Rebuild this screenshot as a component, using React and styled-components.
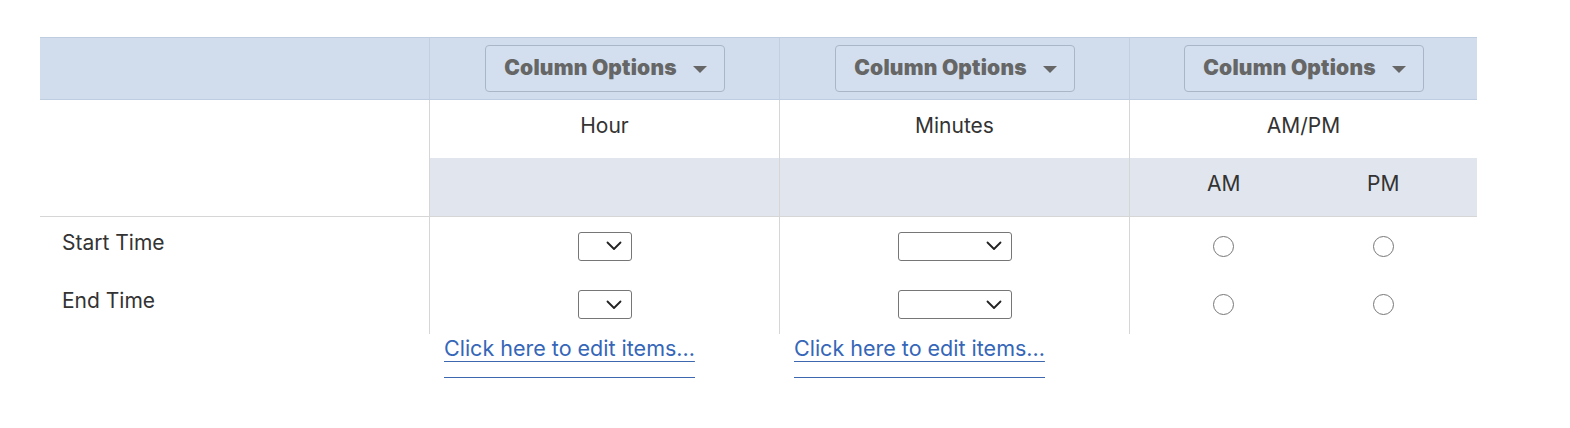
import React from "react";
import styled, { createGlobalStyle } from "styled-components";

const Global = createGlobalStyle`
  html, body { margin: 0; padding: 0; background: #fff; }
  body { font-family: Inter, "Liberation Sans", Arial, sans-serif; color: #333; }
`;

const Page = styled.div`
  padding: 37px 0 0 40px;
  width: 1437px;
`;

const Grid = styled.div`
  display: grid;
  grid-template-columns: 389px 350px 350px 348px;
`;

const HeadCell = styled.div`
  height: 61px;
  background: #d1ddec;
  border-top: 1px solid #bfcde0;
  border-bottom: 1px solid #bfcde0;
  border-left: ${(p) => (p.$first ? "none" : "1px solid #c3cfdf")};
  display: flex;
  align-items: center;
  justify-content: center;
  box-sizing: content-box;
`;

const OptionsButton = styled.div`
  width: 240px;
  height: 47px;
  box-sizing: border-box;
  border: 1px solid #a9b6c8;
  border-radius: 4px;
  background: #d3dfee;
  display: flex;
  align-items: center;
  justify-content: center;
  gap: 16px;
  font-family: Inter, "Open Sans", sans-serif;
  font-weight: 900;
  font-size: 21px;
  letter-spacing: 0.2px;
  color: #666;
  padding: 0 0 3px 2px;
`;

const Caret = styled.span`
  width: 0;
  height: 0;
  border-left: 7px solid transparent;
  border-right: 7px solid transparent;
  border-top: 7px solid #666;
  margin-top: 4px;
`;

const Cell = styled.div`
  height: ${(p) => p.$h || 58}px;
  box-sizing: border-box;
  border-left: ${(p) => (p.$first ? "none" : "1px solid #d6d6d6")};
  border-bottom: ${(p) => (p.$bottom ? "1px solid #d6d6d6" : "none")};
  background: ${(p) => (p.$grey ? "#e1e5ed" : "#fff")};
  display: flex;
  align-items: center;
  justify-content: ${(p) => (p.$left ? "flex-start" : "center")};
  padding-left: ${(p) => (p.$left ? "22px" : "0")};
  font-size: 21px;
  color: #333;
`;

const Label = styled.span`
  margin-top: ${(p) => p.$mt || 0}px;
`;

const Pair = styled.div`
  width: 100%;
  padding: 0 14px;
  box-sizing: border-box;
  display: grid;
  grid-template-columns: 1fr 1fr;
  justify-items: center;
  align-items: center;
`;

const SelectBox = styled.div`
  width: ${(p) => p.$w}px;
  height: 29px;
  box-sizing: border-box;
  border: 1px solid #767676;
  border-radius: 3px;
  background: #fff;
  display: flex;
  align-items: center;
  justify-content: flex-end;
  padding-right: 9px;
  margin-top: ${(p) => p.$mt || 0}px;
`;

const Radio = styled.span`
  display: block;
  width: 21px;
  height: 21px;
  box-sizing: border-box;
  border: 1.5px solid #777;
  border-radius: 50%;
  background: #fff;
  margin-top: ${(p) => p.$mt || 0}px;
`;

const LinkCell = styled.div`
  padding: 0 0 0 15px;
`;

const EditLink = styled.a`
  display: inline-block;
  font-size: 21.5px;
  color: #3566b8;
  text-decoration: underline;
  text-decoration-color: #3d68b0;
  text-decoration-thickness: 1px;
  text-underline-offset: 5px;
  border-bottom: 1px solid #3d68b0;
  padding-bottom: 14px;
  line-height: 30px;
  margin-top: -1px;
  cursor: pointer;
`;

const Chevron = () => (
  <svg width="16" height="10" viewBox="0 0 16 10">
    <path d="M1.5 1.5 L8 8 L14.5 1.5" fill="none" stroke="#222" strokeWidth="1.8" strokeLinecap="round" strokeLinejoin="round" />
  </svg>
);

const rows = [
  { label: "Start Time", h: 58, mt: -7, ctl: 0 },
  { label: "End Time", h: 59, mt: -8, ctl: 0 },
];

export default function App() {
  return (
    <>
      <Global />
      <Page>
        <Grid>
          <HeadCell $first />
          {[0, 1, 2].map((i) => (
            <HeadCell key={i}>
              <OptionsButton>
                Column Options
                <Caret />
              </OptionsButton>
            </HeadCell>
          ))}

          <Cell $first />
          <Cell>
            <Label $mt={-7}>Hour</Label>
          </Cell>
          <Cell>
            <Label $mt={-7}>Minutes</Label>
          </Cell>
          <Cell>
            <Label $mt={-7}>AM/PM</Label>
          </Cell>

          <Cell $first $bottom $h={59} />
          <Cell $grey $bottom $h={59} />
          <Cell $grey $bottom $h={59} />
          <Cell $grey $bottom $h={59}>
            <Pair>
              <Label $mt={-7}>AM</Label>
              <Label $mt={-7}>PM</Label>
            </Pair>
          </Cell>

          {rows.map((r) => (
            <React.Fragment key={r.label}>
              <Cell $first $left $h={r.h}>
                <Label $mt={r.mt}>{r.label}</Label>
              </Cell>
              <Cell $h={r.h}>
                <SelectBox $w={54} $mt={r.ctl}>
                  <Chevron />
                </SelectBox>
              </Cell>
              <Cell $h={r.h}>
                <SelectBox $w={114} $mt={r.ctl}>
                  <Chevron />
                </SelectBox>
              </Cell>
              <Cell $h={r.h}>
                <Pair>
                  <Radio $mt={r.ctl} />
                  <Radio $mt={r.ctl} />
                </Pair>
              </Cell>
            </React.Fragment>
          ))}

          <div />
          <LinkCell>
            <EditLink>Click here to edit items...</EditLink>
          </LinkCell>
          <LinkCell>
            <EditLink>Click here to edit items...</EditLink>
          </LinkCell>
          <div />
        </Grid>
      </Page>
    </>
  );
}
